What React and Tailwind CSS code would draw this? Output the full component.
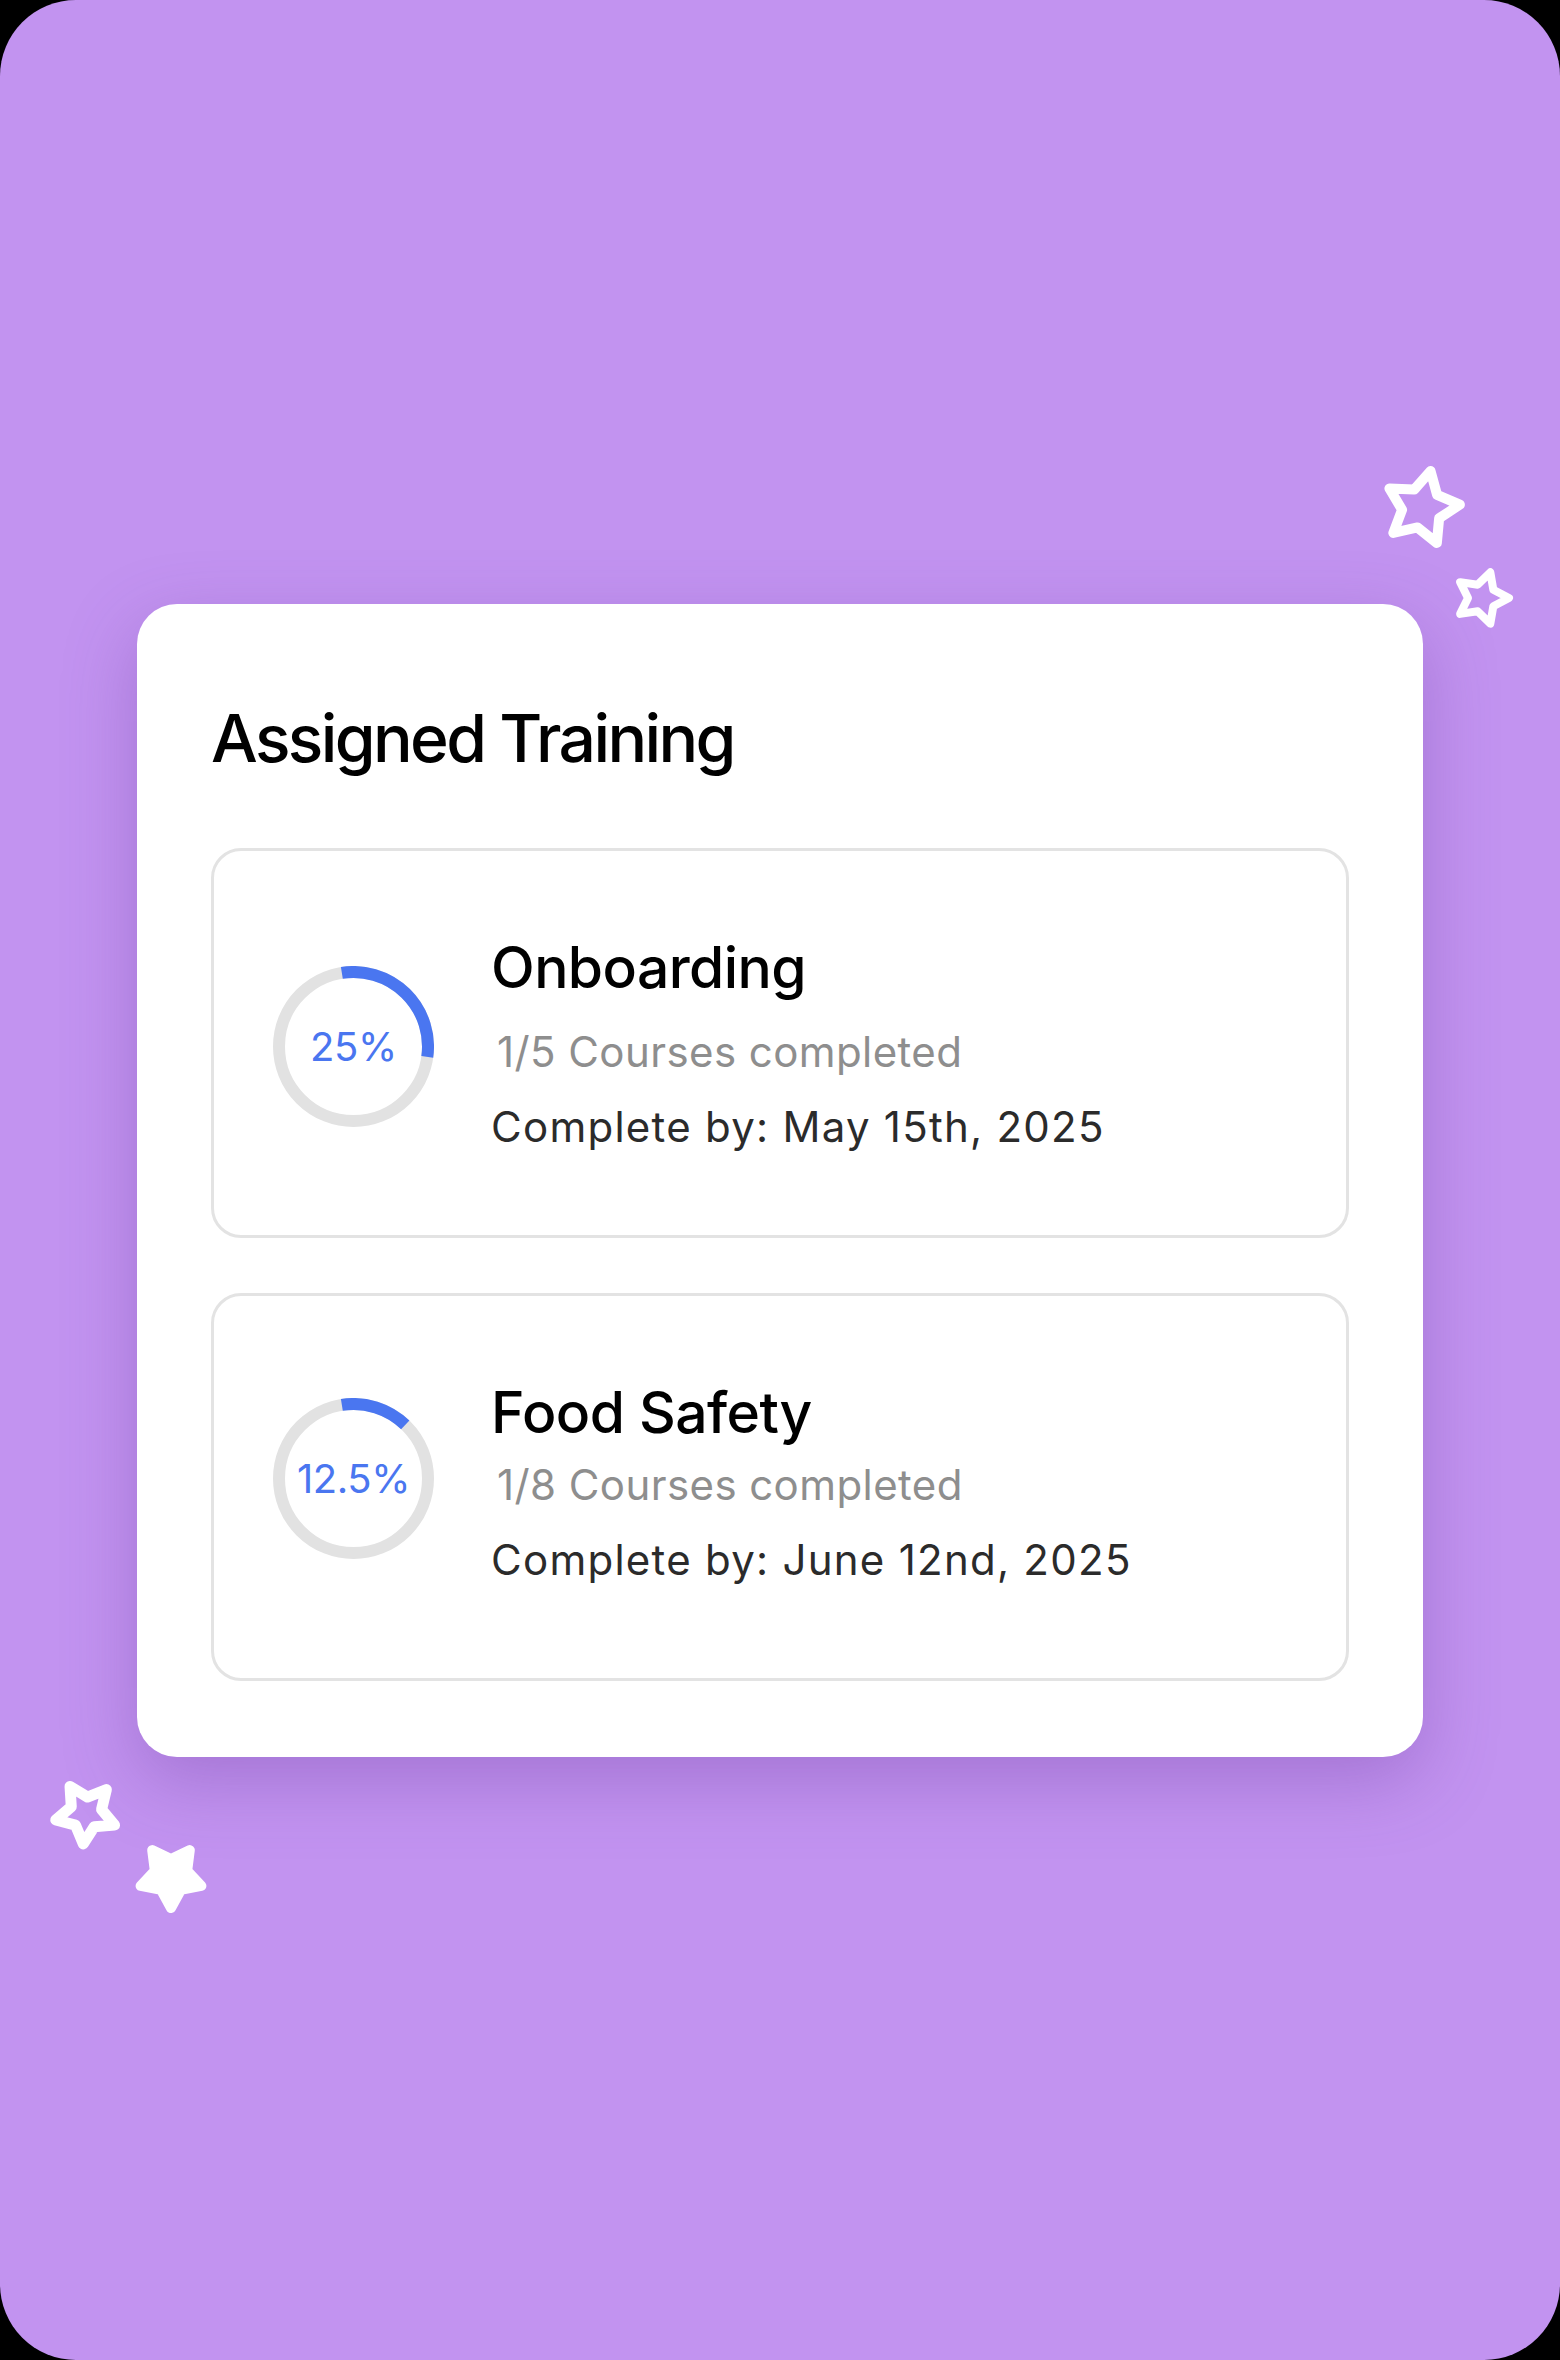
import React from "react";

const trainings = [
  {
    title: "Onboarding",
    percent: "25%",
    arc: [-9, 98],
    courses: "1/5 Courses completed",
    due: "Complete by: May 15th, 2025",
    ringTop: "mt-[115px]",
    gapTop: "mt-[35px]",
  },
  {
    title: "Food Safety",
    percent: "12.5%",
    arc: [-9, 44],
    courses: "1/8 Courses completed",
    due: "Complete by: June 12nd, 2025",
    ringTop: "mt-[102px]",
    gapTop: "mt-[23px]",
  },
];

// angle in degrees, measured clockwise from 12 o'clock
const polar = (cx, cy, r, deg) => {
  const rad = ((deg - 90) * Math.PI) / 180;
  return [cx + r * Math.cos(rad), cy + r * Math.sin(rad)];
};

const arcPath = (cx, cy, r, from, to) => {
  const [x0, y0] = polar(cx, cy, r, from);
  const [x1, y1] = polar(cx, cy, r, to);
  const large = to - from > 180 ? 1 : 0;
  return `M ${x0} ${y0} A ${r} ${r} 0 ${large} 1 ${x1} ${y1}`;
};

const starPoints = (cx, cy, outer, inner, rot) => {
  const pts = [];
  for (let i = 0; i < 10; i++) {
    const r = i % 2 === 0 ? outer : inner;
    const [x, y] = polar(cx, cy, r, rot + i * 36);
    pts.push(`${x.toFixed(2)},${y.toFixed(2)}`);
  }
  return pts.join(" ");
};

const Star = ({ size, outer, inner, rot, stroke, filled, className }) => (
  <svg
    width={size}
    height={size}
    viewBox={`0 0 ${size} ${size}`}
    className={className}
  >
    <polygon
      points={starPoints(size / 2, size / 2, outer, inner, rot)}
      fill={filled ? "#ffffff" : "none"}
      stroke="#ffffff"
      strokeWidth={stroke}
      strokeLinejoin="round"
    />
  </svg>
);

const ProgressRing = ({ percent, arc, className }) => (
  <div className={`relative w-[161px] h-[161px] shrink-0 ${className}`}>
    <svg width="161" height="161" viewBox="0 0 161 161">
      <circle cx="80.5" cy="80.5" r="74.5" fill="none" stroke="#e2e2e2" strokeWidth="12" />
      <path
        d={arcPath(80.5, 80.5, 74.5, arc[0], arc[1])}
        fill="none"
        stroke="#4a76f0"
        strokeWidth="12"
      />
    </svg>
    <div className="absolute inset-0 flex items-center justify-center">
      <span className="text-[40px] leading-none text-[#4a76f0] tracking-[-0.01em]">
        {percent}
      </span>
    </div>
  </div>
);

const TrainingRow = ({ item, className }) => (
  <div
    className={`flex items-start rounded-[30px] border-[3px] border-[#e3e3e3] pl-[59px] ${className}`}
  >
    <ProgressRing percent={item.percent} arc={item.arc} className={item.ringTop} />
    <div className="ml-[57px] mt-[88px] flex flex-col">
      <h3 className="text-[57px] leading-none font-medium text-black tracking-[-0.01em]">
        {item.title}
      </h3>
      <p className={`${item.gapTop} ml-[6px] text-[42px] leading-none text-[#8e8e8e] tracking-[0.01em]`}>
        {item.courses}
      </p>
      <p className="mt-[33px] text-[42px] leading-none text-[#2b2b2b] tracking-[0.03em]">
        {item.due}
      </p>
    </div>
  </div>
);

export default function App() {
  return (
    <div
      className="w-[1560px] h-[2360px] bg-black"
      style={{ fontFamily: "Inter, 'Noto Sans', sans-serif" }}
    >
      <div className="relative w-full h-full rounded-[76px] bg-[#c293f0] pt-[604px] pl-[137px]">
        <Star size={100} outer={38} inner={20} rot={13} stroke={10} className="absolute left-[1372px] top-[458px]" />
        <Star size={72} outer={27} inner={14} rot={18} stroke={8} className="absolute left-[1446px] top-[562px]" />
        <Star size={90} outer={31} inner={16} rot={185} stroke={11} className="absolute left-[41px] top-[1768px]" />
        <Star size={90} outer={32} inner={17} rot={180} stroke={10} filled className="absolute left-[126px] top-[1831px]" />

        <div className="w-[1286px] h-[1153px] rounded-[40px] bg-white px-[74px] pt-[101px] shadow-[0_24px_70px_rgba(110,60,160,0.35)]">
          <h2 className="text-[66px] leading-none font-medium text-black tracking-[-0.04em]">
            Assigned Training
          </h2>
          <TrainingRow item={trainings[0]} className="mt-[77px] h-[390px]" />
          <TrainingRow item={trainings[1]} className="mt-[55px] h-[388px]" />
        </div>
      </div>
    </div>
  );
}
